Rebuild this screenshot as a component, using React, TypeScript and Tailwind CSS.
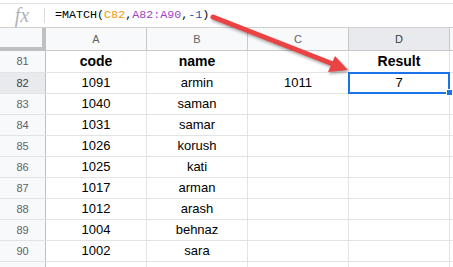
const rows: { n: number; a: string; b: string; c: string; d: string }[] = [
  { n: 82, a: "1091", b: "armin", c: "1011", d: "7" },
  { n: 83, a: "1040", b: "saman", c: "", d: "" },
  { n: 84, a: "1031", b: "samar", c: "", d: "" },
  { n: 85, a: "1026", b: "korush", c: "", d: "" },
  { n: 86, a: "1025", b: "kati", c: "", d: "" },
  { n: 87, a: "1017", b: "arman", c: "", d: "" },
  { n: 88, a: "1012", b: "arash", c: "", d: "" },
  { n: 89, a: "1004", b: "behnaz", c: "", d: "" },
  { n: 90, a: "1002", b: "sara", c: "", d: "" },
];

function Cell({ children, bold }: { children?: React.ReactNode; bold?: boolean }) {
  return (
    <div
      className={`w-[101px] shrink-0 h-full border-r border-[#e2e3e3] flex items-center justify-center text-black ${
        bold ? "font-bold text-[14px]" : "text-[13px]"
      }`}
    >
      {children}
    </div>
  );
}

export default function App() {
  return (
    <div className="relative w-[453px] h-[267px] overflow-hidden bg-white font-['Liberation_Sans',Arial,sans-serif]">
      <div className="h-[4px] border-b border-[#e0e0e0]" />

      {/* formula bar */}
      <div className="flex h-[23px] items-center">
        <div className="w-[45px] shrink-0 flex items-center justify-center border-r border-[#dadce0] h-[15px]">
          <span className="font-['Liberation_Serif',serif] italic text-[20px] leading-none text-[#b0b3b8] -mt-[2px]">fx</span>
        </div>
        <div className="pl-[10px] font-['Liberation_Mono',monospace] text-[11.7px] text-black">
          =MATCH(<span className="text-[#f29900]">C82</span>,<span className="text-[#a142c4]">A82:A90</span>,<span className="text-[#1558b0]">-1</span>)
        </div>
      </div>

      {/* column headers */}
      <div className="flex h-[24px] border-t border-[#d0d0d0] bg-[#f8f9fa] text-[11px] text-[#5f6368]">
        <div className="w-[46px] shrink-0 h-full border-r-4 border-b-4 border-[#c0c0c0]" />
        {["A", "B", "C", "D"].map((l) => (
          <div
            key={l}
            className={`w-[101px] shrink-0 h-full border-r border-b border-[#c8c8c8] flex items-center justify-center ${
              l === "D" ? "bg-[#e8eaed] text-[#3c4043]" : ""
            }`}
          >
            {l}
          </div>
        ))}
        <div className="flex-1 h-full border-b border-[#c8c8c8]" />
      </div>

      {/* row 81 */}
      <div className="flex h-[22px] border-b border-[#e2e3e3]">
        <div className="w-[46px] shrink-0 h-full bg-[#f8f9fa] border-r border-[#c0c0c0] flex items-center justify-center text-[11px] text-[#5f6368]">
          81
        </div>
        <Cell bold>code</Cell>
        <Cell bold>name</Cell>
        <Cell />
        <Cell bold>Result</Cell>
      </div>

      {rows.map((r) => (
        <div key={r.n} className="flex h-[21px] border-b border-[#e2e3e3]">
          <div
            className={`w-[46px] shrink-0 h-full border-r border-[#c0c0c0] flex items-center justify-center text-[11px] ${
              r.n === 82 ? "bg-[#e8eaed] text-[#3c4043]" : "bg-[#f8f9fa] text-[#5f6368]"
            }`}
          >
            {r.n}
          </div>
          <Cell>{r.a}</Cell>
          <Cell>{r.b}</Cell>
          <Cell>{r.c}</Cell>
          <Cell>{r.d}</Cell>
        </div>
      ))}

      <div className="flex h-[21px]">
        <div className="w-[46px] shrink-0 h-full bg-[#f8f9fa] border-r border-[#c0c0c0]" />
        <Cell />
        <Cell />
        <Cell />
        <Cell />
      </div>

      {/* selection of D82 */}
      <div className="absolute left-[348px] top-[72px] w-[102px] h-[22px] border-2 border-[#1a73e8]" />
      <div className="absolute left-[446px] top-[89px] w-[7px] h-[7px] bg-[#1a73e8] border border-white" />

      {/* annotation arrow */}
      <svg
        className="absolute inset-0 pointer-events-none drop-shadow-[1px_2px_1.5px_rgba(0,0,0,0.35)]"
        width="453"
        height="267"
        viewBox="0 0 453 267"
      >
        <line x1="213" y1="17" x2="333" y2="64" stroke="#ea4343" strokeWidth="5" strokeLinecap="round" />
        <polygon points="348,70 328,72 335,56" fill="#ea4343" />
      </svg>
    </div>
  );
}
